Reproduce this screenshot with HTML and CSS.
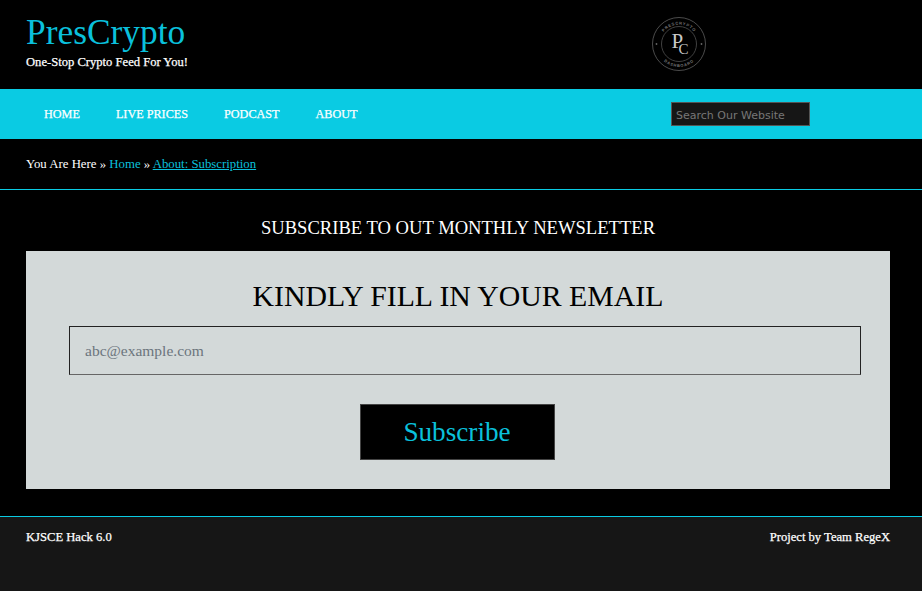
FILE: index.html
```html
<!DOCTYPE html>
<html lang="en">

<head>
    <meta charset="UTF-8">
    <meta name="viewport" content="width=device-width, initial-scale=1.0">
    <title>PresCrypto - Subscribe</title>
    <link rel="stylesheet" href="styles.css">
</head>

<body>

    <header class="top">
        <div class="brand">
            <h1 class="brand__name">PresCrypto</h1>
            <p class="brand__tag">One-Stop Crypto Feed For You!</p>
        </div>
        <svg class="logo" width="56" height="56" viewBox="0 0 56 56" aria-label="PresCrypto logo">
            <defs>
                <path id="arcTop" d="M8.500 28a19.500 19.500 0 0 1 39 0"></path>
                <path id="arcBottom" d="M5 28a23 23 0 0 0 46 0"></path>
            </defs>
            <circle cx="28" cy="28" r="26.500" fill="none" stroke="#5e5e5e" stroke-width="0.800"></circle>
            <circle cx="28" cy="28" r="17.500" fill="none" stroke="#505050" stroke-width="0.800"></circle>
            <circle cx="5.500" cy="28" r="0.900" fill="#666"></circle>
            <circle cx="50.500" cy="28" r="0.900" fill="#666"></circle>
            <text class="logo__ring"><textPath href="#arcTop" startOffset="50%" text-anchor="middle">PRESCRYPTO</textPath></text>
            <text class="logo__ring"><textPath href="#arcBottom" startOffset="50%" text-anchor="middle">DASHBOARD</textPath></text>
            <text class="logo__mark" x="20.500" y="32">P<tspan class="logo__c" x="27.500" y="38">C</tspan></text>
        </svg>
    </header>

    <nav class="nav">
        <ul class="nav__links">
            <li><a href="#">HOME</a></li>
            <li><a href="#">LIVE PRICES</a></li>
            <li><a href="#">PODCAST</a></li>
            <li><a href="#">ABOUT</a></li>
        </ul>
        <input class="nav__search" type="text" placeholder="Search Our Website">
    </nav>

    <div class="crumbs">
        You Are Here &raquo; <a class="crumbs__home" href="#">Home</a> &raquo; <a class="crumbs__current" href="#">About: Subscription</a>
    </div>

    <main class="content">
        <h2 class="content__title">SUBSCRIBE TO OUT MONTHLY NEWSLETTER</h2>
        <form class="card">
            <h3 class="card__title">KINDLY FILL IN YOUR EMAIL</h3>
            <input class="card__input" type="email" placeholder="abc@example.com">
            <button class="card__button">Subscribe</button>
        </form>
    </main>

    <footer class="footer">
        <span>KJSCE Hack 6.0</span>
        <span>Project by Team RegeX</span>
    </footer>

</body>

</html>
```

FILE: styles.css
```css
/* CSS Reset */
html {
    box-sizing: border-box;
    font-size: 16px;
}

*,
*:before,
*:after {
    box-sizing: inherit;
}

body,
h1,
h2,
h3,
p,
ul {
    margin: 0;
    padding: 0;
    font-weight: normal;
}

ul {
    list-style: none;
}

body {
    background: #000;
    color: #fff;
    font-family: "Liberation Serif", "Times New Roman", serif;
    min-height: 591px;
    display: flex;
    flex-direction: column;
}

a {
    color: inherit;
    text-decoration: none;
}

.top {
    height: 89px;
    padding: 13px 26px 0;
    display: flex;
    align-items: flex-start;
}

.brand {
    width: 625px;
}

.brand__name {
    color: #0ac0dc;
    font-size: 35.400px;
    line-height: 38px;
}

.brand__tag {
    font-size: 12.600px;
    line-height: 18px;
    margin-top: 2px;
    -webkit-text-stroke: 0.25px #fff;
}

.logo {
    margin-top: 3px;
}

.logo__ring {
    fill: #777;
    font-family: "Liberation Sans", sans-serif;
    font-size: 4px;
    font-weight: bold;
    letter-spacing: 0.800px;
}

.logo__mark {
    fill: #c8c8c8;
    font-size: 21px;
}

.logo__c {
    font-size: 15px;
}

.nav {
    height: 50px;
    background: #0acbe3;
    padding-left: 44px;
    display: flex;
    align-items: center;
    justify-content: space-between;
}

.nav__links {
    display: flex;
    gap: 36px;
    font-size: 12.200px;
    -webkit-text-stroke: 0.25px #fff;
}

.nav__search {
    width: 139px;
    height: 24px;
    margin-right: 112px;
    padding: 2px 4px 0;
    background: #161616;
    border: 1px solid #555;
    color: #fff;
    font-family: "DejaVu Sans", sans-serif;
    font-size: 11px;
}

.nav__search::placeholder {
    color: #777;
}

.crumbs {
    height: 51px;
    padding: 16px 26px 0;
    border-bottom: 1px solid #0acbe3;
    font-size: 12.800px;
    line-height: 18px;
}

.crumbs__home {
    color: #0ac0dc;
}

.crumbs__current {
    color: #0ac0dc;
    text-decoration: underline;
}

.content {
    padding: 0 32px 27px 26px;
    width: 922px;
}

.content__title {
    height: 61px;
    padding-top: 26px;
    text-align: center;
    font-size: 18.600px;
    line-height: 24px;
}

.card {
    height: 238px;
    background: #d3d9d9;
    color: #000;
    display: flex;
    flex-direction: column;
    align-items: center;
    padding: 26px 0 0;
    width: 864px;
}

.card__title {
    font-size: 29.800px;
    line-height: 38px;
}

.card__input {
    width: 792px;
    height: 49px;
    margin-top: 11px;
    margin-left: 14px;
    padding: 0 15px;
    background: transparent;
    border: 1px solid #222;
    border-bottom-color: #666;
    font-family: "Liberation Serif", serif;
    font-size: 15.500px;
}

.card__input::placeholder {
    color: #6c757d;
}

.card__button {
    width: 195px;
    height: 56px;
    margin-top: 29px;
    margin-right: 2px;
    background: #000;
    color: #0ac0dc;
    border: 1px solid #444;
    font-family: "Liberation Serif", serif;
    font-size: 27.200px;
}

.footer {
    flex: 1;
    background: #161616;
    border-top: 1px solid #0acbe3;
    padding: 11px 32px 0 26px;
    display: flex;
    justify-content: space-between;
    font-size: 12.600px;
    line-height: 18px;
    -webkit-text-stroke: 0.25px #fff;
}
```
